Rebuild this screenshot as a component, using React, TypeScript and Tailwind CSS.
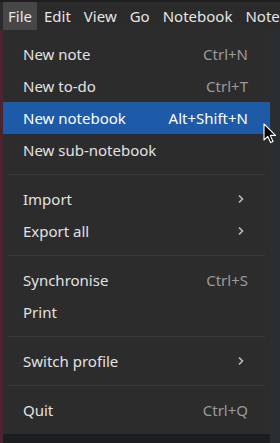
import React from "react";

type Item =
  | { kind: "item"; label: string; shortcut?: string; sub?: boolean; active?: boolean }
  | { kind: "sep" };

const items: Item[] = [
  { kind: "item", label: "New note", shortcut: "Ctrl+N" },
  { kind: "item", label: "New to-do", shortcut: "Ctrl+T" },
  { kind: "item", label: "New notebook", shortcut: "Alt+Shift+N", active: true },
  { kind: "item", label: "New sub-notebook" },
  { kind: "sep" },
  { kind: "item", label: "Import", sub: true },
  { kind: "item", label: "Export all", sub: true },
  { kind: "sep" },
  { kind: "item", label: "Synchronise", shortcut: "Ctrl+S" },
  { kind: "item", label: "Print" },
  { kind: "sep" },
  { kind: "item", label: "Switch profile", sub: true },
  { kind: "sep" },
  { kind: "item", label: "Quit", shortcut: "Ctrl+Q" },
];

function Chevron() {
  return (
    <svg width="8" height="10" viewBox="0 0 8 10" className="mr-[3px]">
      <path d="M2 1.5 L5.5 5 L2 8.5" fill="none" stroke="#bdbdbd" strokeWidth="1.6" />
    </svg>
  );
}

export default function App() {
  return (
    <div
      className="relative w-[280px] h-[443px] overflow-hidden bg-[#1c1e22] text-[15px]"
      style={{ fontFamily: '"Noto Sans", "Open Sans", sans-serif' }}
    >
      {/* menubar */}
      <div className="h-[30px] bg-[#2b2b2b] border-t-2 border-[#1f1f1f] flex items-stretch pl-[3px] text-[#e6e6e6] whitespace-nowrap">
        <div className="bg-[#474747] px-[5px] flex items-center">File</div>
        <div className="pl-[7px] flex items-center gap-[13px]">
          <span>Edit</span>
          <span>View</span>
          <span>Go</span>
          <span>Notebook</span>
          <span>Note</span>
        </div>
      </div>
      {/* below menubar */}
      <div className="flex h-[413px]">
        <div className="w-[3px] bg-[#4a2430]" />
        <div className="flex flex-col w-[267px]">
          <div className="bg-[#2c2c2c] py-[8px] flex flex-col">
            {items.map((it, i) =>
              it.kind === "sep" ? (
                <div key={i} className="py-[8px] px-[5px]">
                  <div className="h-px bg-[#3a3a3a]" />
                </div>
              ) : (
                <div
                  key={i}
                  className={`h-[32px] flex items-center justify-between pl-[20px] pr-[22px] ${
                    it.active ? "bg-[#1d5aa8] text-white" : "text-[#e2e2e2]"
                  }`}
                >
                  <span>{it.label}</span>
                  {it.shortcut && (
                    <span className={it.active ? "text-white" : "text-[#9b9b9b]"}>{it.shortcut}</span>
                  )}
                  {it.sub && <Chevron />}
                </div>
              )
            )}
          </div>
          <div className="flex-1 bg-[#1b1d21]" />
        </div>
        <div className="flex-1 bg-[#2a2d32]" />
      </div>
      {/* mouse cursor */}
      <svg
        className="absolute left-[263px] top-[123px]"
        width="14"
        height="21"
        viewBox="0 0 14 21"
      >
        <path
          d="M1 1 L1 17 L4.8 13.4 L7.6 19.6 L10 18.5 L7.3 12.4 L12.5 12.4 Z"
          fill="#000"
          stroke="#fff"
          strokeWidth="1.1"
          strokeLinejoin="round"
        />
      </svg>
    </div>
  );
}
